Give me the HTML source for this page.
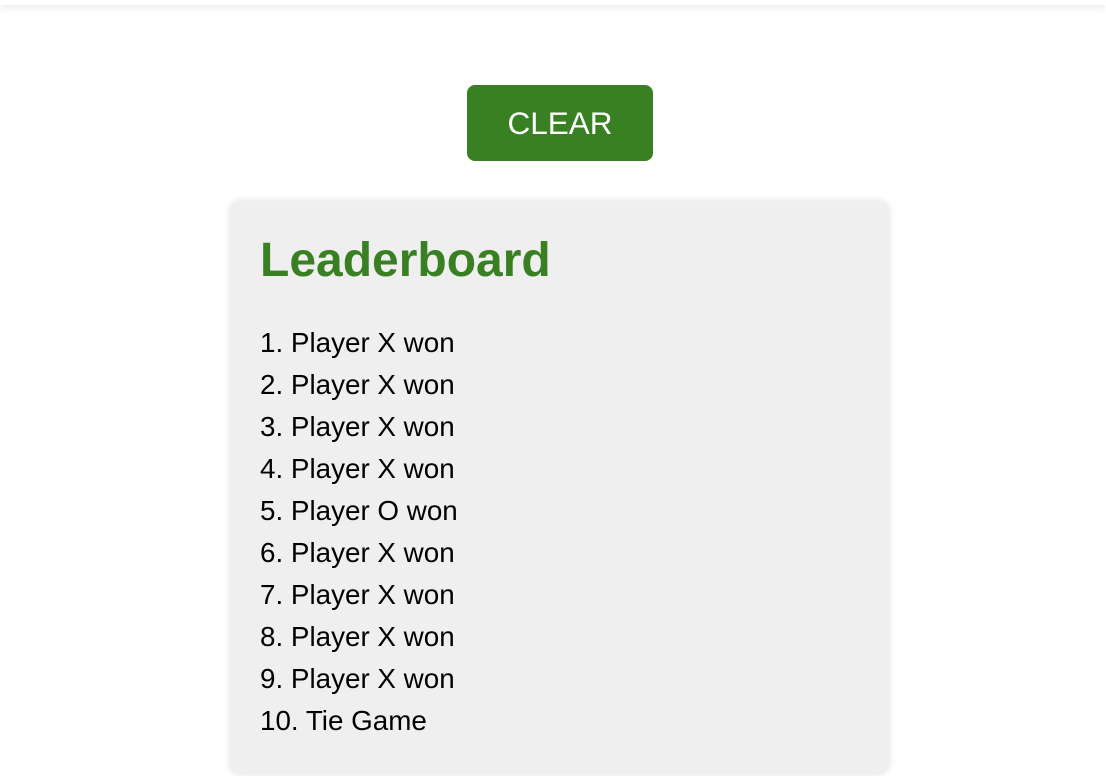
<!DOCTYPE html>
<html><head><style>
html,body{margin:0;background:#fff;font-family:"Liberation Sans",Arial,sans-serif;width:1106px;height:776px;overflow:hidden;position:relative}
.bar{position:absolute;top:0;left:0;right:0;height:5px;background:#fff;box-shadow:0 2px 8px rgba(0,0,0,0.12)}
.btn{position:absolute;left:467px;top:85px;width:186px;height:76px;background:#388021;border-radius:8px;color:#fff;font-size:31.5px;line-height:76px;text-align:center}
.panel{position:absolute;left:230px;top:201px;width:659px;height:573px;background:#efefef;border-radius:10px;box-shadow:0 0 8px rgba(0,0,0,0.12)}
h1{position:absolute;left:30px;top:33px;margin:0;font-size:48px;font-weight:bold;color:#388021;line-height:54px}
.list{position:absolute;left:30px;top:121px;font-size:27.8px;line-height:42px;color:#000}
</style></head><body>
<div class="bar"></div>
<div class="btn">CLEAR</div>
<div class="panel">
<h1>Leaderboard</h1>
<div class="list">
<div>1. Player X won</div><div>2. Player X won</div><div>3. Player X won</div><div>4. Player X won</div><div>5. Player O won</div><div>6. Player X won</div><div>7. Player X won</div><div>8. Player X won</div><div>9. Player X won</div><div>10. Tie Game</div>
</div></div>
</body></html>
